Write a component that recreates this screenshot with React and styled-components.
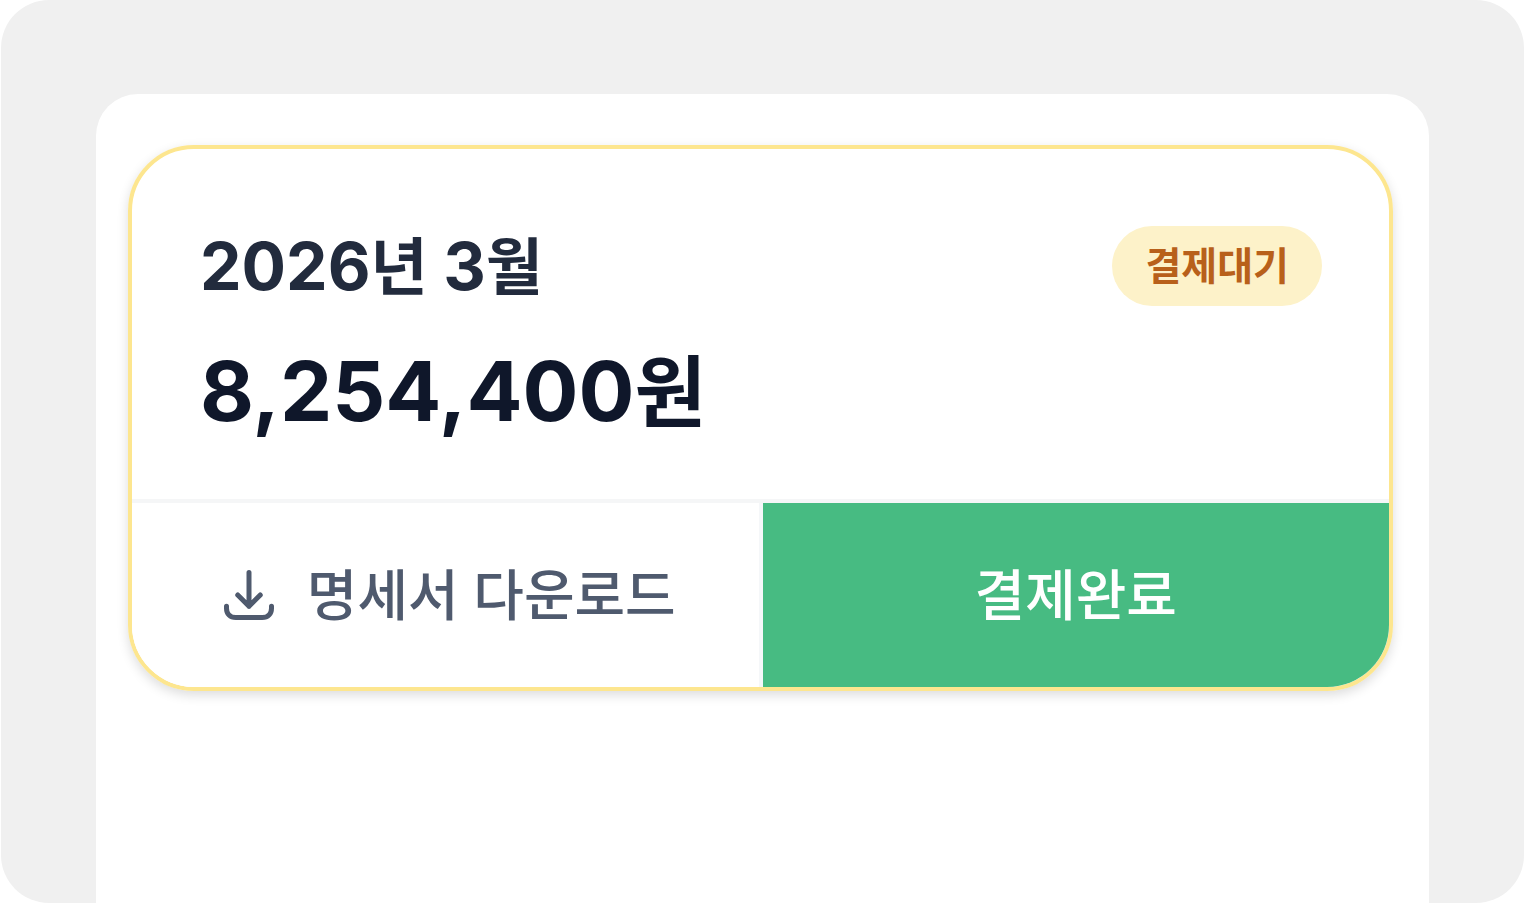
import styled, { createGlobalStyle } from "styled-components";

const App = () => (
  <Page>
    <GlobalStyle />
    <Frame>
      <Panel>
        <InvoiceCard year={2026} month={3} amount={8254400} status="결제대기" />
      </Panel>
    </Frame>
  </Page>
);

const InvoiceCard = ({ year, month, amount, status }) => (
  <Card>
    <Summary>
      <Heading>
        <Month>
          {year}
          <Unit>년</Unit> {month}
          <Unit>월</Unit>
        </Month>
        <Badge>{status}</Badge>
      </Heading>
      <Amount>
        {amount.toLocaleString("en-US")}
        <Unit>원</Unit>
      </Amount>
    </Summary>
    <Actions>
      <Action type="button">
        <DownloadIcon />
        <Label>명세서 다운로드</Label>
      </Action>
      <Action type="button" $primary>
        <Label>결제완료</Label>
      </Action>
    </Actions>
  </Card>
);

const DownloadIcon = () => (
  <Icon viewBox="0 0 24 24" aria-hidden="true">
    <path d="M3 16.5v.75C3 19.6 4.4 21 6.75 21h10.5C19.6 21 21 19.6 21 17.25v-.75M16.5 12 12 16.5m0 0L7.5 12m4.5 4.5V3" />
  </Icon>
);

const GlobalStyle = createGlobalStyle`
  * {
    box-sizing: border-box;
  }
  body {
    margin: 0;
    background-color: #ffffff;
    font-family: Inter, "Noto Sans CJK KR", sans-serif;
  }
`;
const Page = styled.div`
  height: 100vh;
  padding: 0 1px 2px;
`;
const Frame = styled.main`
  height: 100%;
  padding: 94px 95px 0;
  background-color: #f0f0f0;
  border-radius: 48px;
  overflow: hidden;
`;
const Panel = styled.div`
  height: 100%;
  padding: 51px 36px 0 32px;
  background-color: #ffffff;
  border-radius: 42px 42px 0 0;
`;
const Card = styled.section`
  border: 4px solid #fde68f;
  border-radius: 66px;
  overflow: hidden;
  box-shadow: 0 4px 12px rgba(0, 0, 0, 0.14);
`;
const Summary = styled.div`
  padding: 77px 67px 58px 68px;
`;
const Heading = styled.header`
  display: flex;
  align-items: center;
  justify-content: space-between;
`;
const Month = styled.h2`
  margin: 0;
  color: #222b3d;
  font-size: 66px;
  font-weight: 700;
  line-height: 80px;
`;
const Unit = styled.span`
  font-size: 0.94em;
  line-height: 1;
`;
const Badge = styled.span`
  padding: 0 33px;
  border-radius: 40px;
  background-color: #fdf2c9;
  color: #b8601a;
  font-size: 39px;
  font-weight: 600;
  line-height: 80px;
`;
const Amount = styled.p`
  margin: 35px 0 0;
  color: #0f172a;
  font-size: 83px;
  font-weight: 700;
  line-height: 100px;
`;
const Actions = styled.footer`
  display: grid;
  grid-template-columns: 1fr 1fr;
  gap: 4px;
  border-top: 4px solid #f5f6f7;
  background-color: #f5f7f9;
`;
const Action = styled.button`
  display: flex;
  align-items: center;
  justify-content: center;
  gap: 28px;
  height: 184px;
  border: 0;
  background-color: ${({ $primary }) => ($primary ? "#47bb82" : "#ffffff")};
  color: ${({ $primary }) => ($primary ? "#ffffff" : "#4f5a6e")};
  font-family: inherit;
  font-size: 55px;
  font-weight: 500;
  cursor: pointer;
`;
const Label = styled.span`
  padding-bottom: 8px;
`;
const Icon = styled.svg`
  width: 60px;
  height: 60px;
  margin-left: 4px;
  fill: none;
  stroke: currentColor;
  stroke-width: 2;
  stroke-linecap: round;
  stroke-linejoin: round;
`;

export default App;
